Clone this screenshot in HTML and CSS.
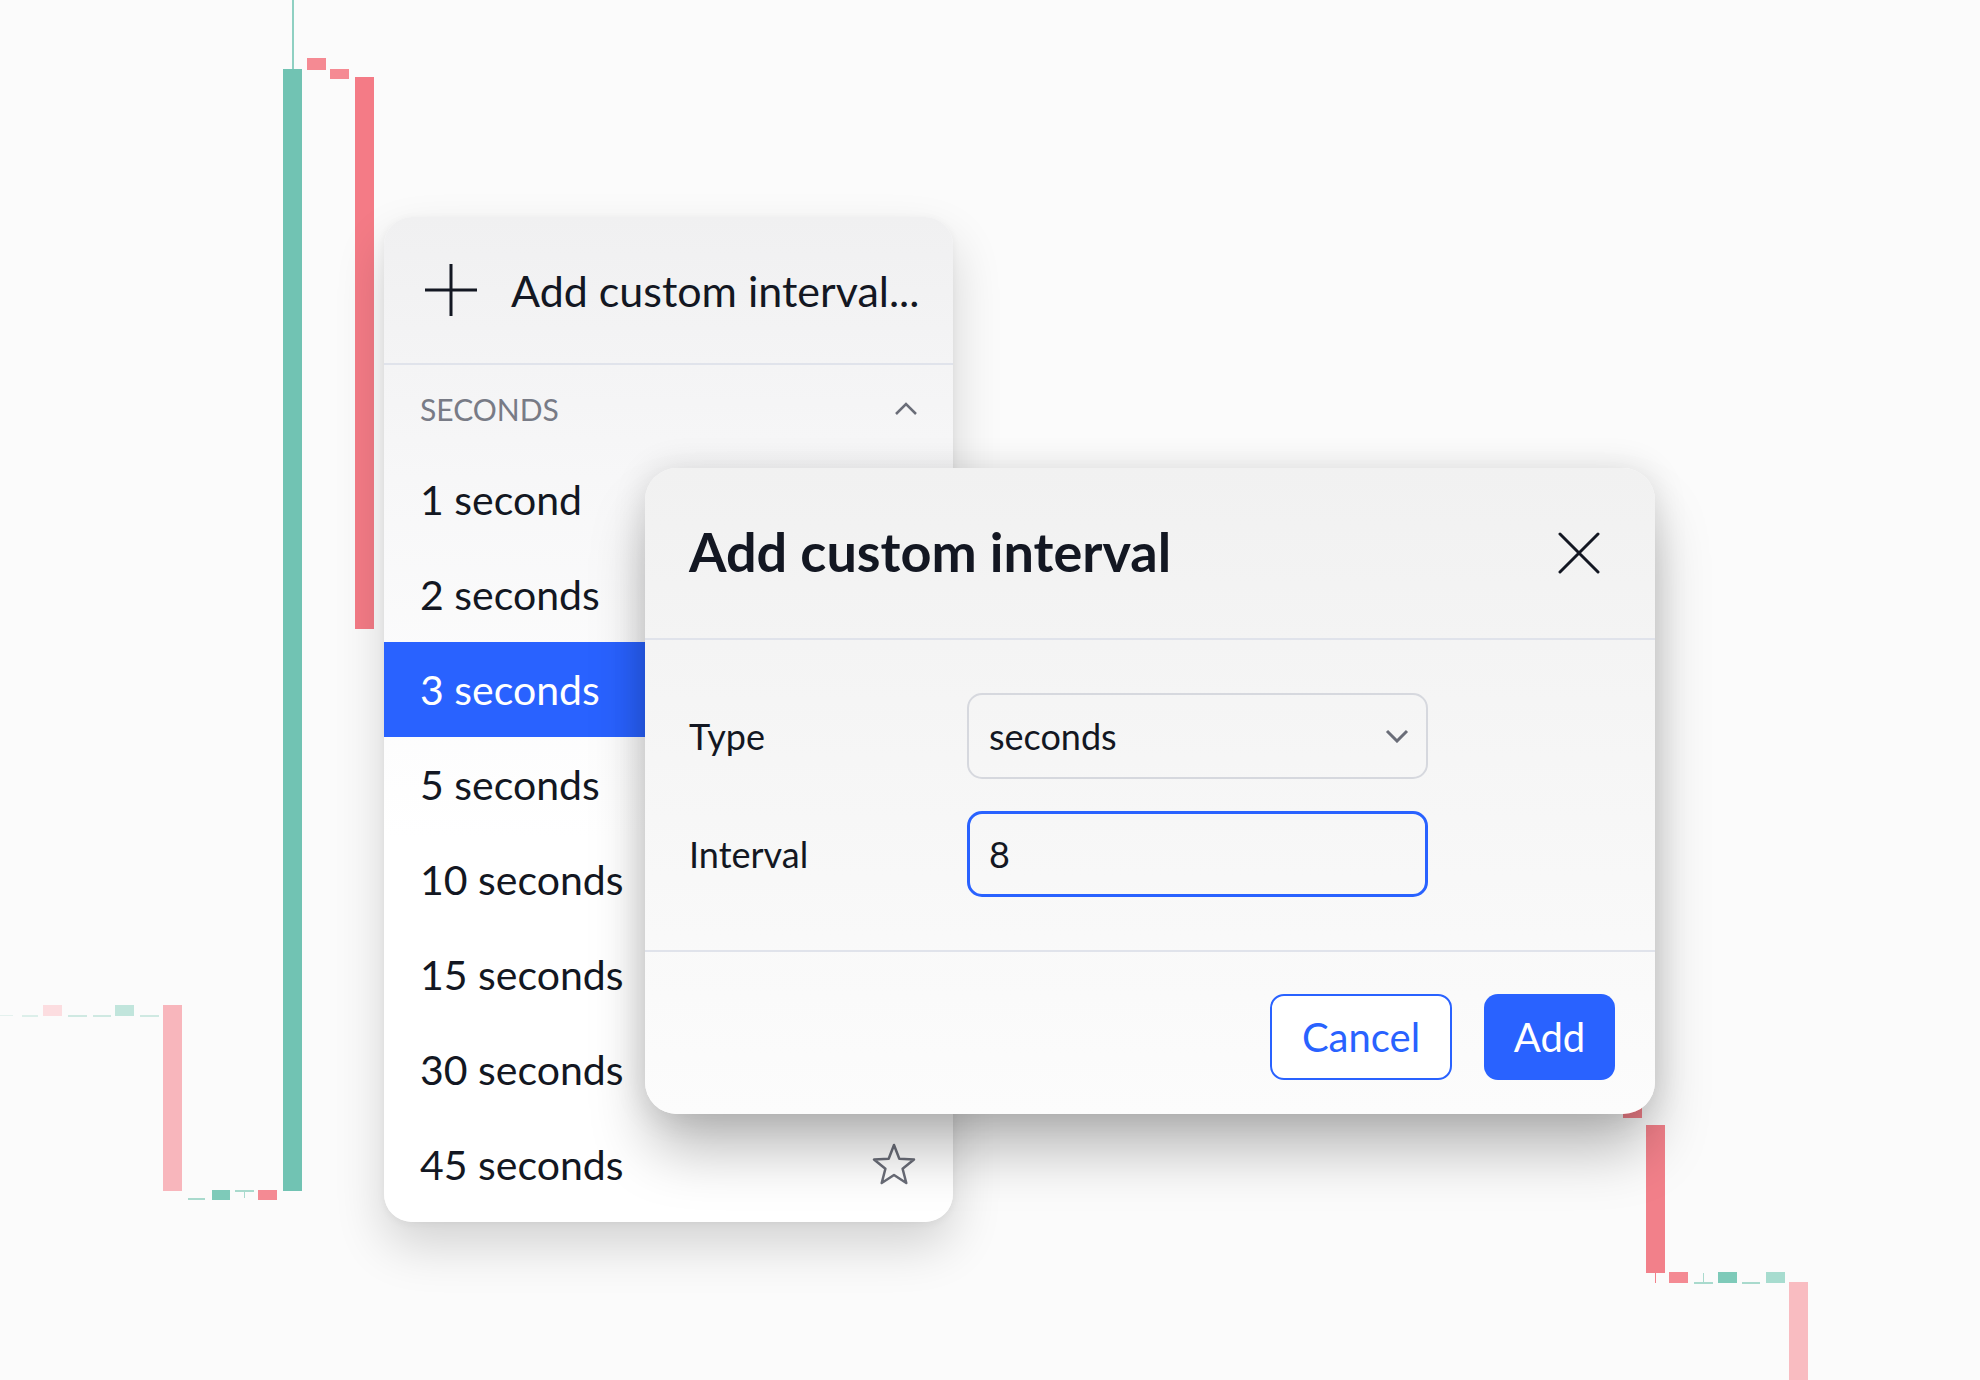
FILE: index.html
```html
<!DOCTYPE html>
<html lang="en">

<head>
    <meta charset="UTF-8">
    <title>Add custom interval</title>
    <link rel="stylesheet" href="styles.css">
</head>

<body>
    <div class="stage">
        <!-- chart candles in the background -->
        <svg class="chart" width="1980" height="1380" viewBox="0 0 1980 1380">
            <rect x="292" y="0" width="2" height="69" fill="#8fd0c2" />
            <rect x="283" y="69" width="19" height="1122" fill="#71c3b3" />
            <rect x="307" y="58" width="19" height="12" fill="#f58a93" />
            <rect x="330" y="69" width="19" height="10" fill="#f58a93" />
            <rect x="355" y="77" width="19" height="552" fill="#f47b86" />

            <rect x="0" y="1015" width="13" height="1" fill="#e4f1ee" />
            <rect x="22" y="1015" width="16" height="2" fill="#dcefea" />
            <rect x="43" y="1005" width="19" height="11" fill="#fcdde0" />
            <rect x="68" y="1015" width="19" height="2" fill="#cfe9e2" />
            <rect x="93" y="1015" width="18" height="2" fill="#cfe9e2" />
            <rect x="115" y="1005" width="19" height="11" fill="#c1e5dc" />
            <rect x="140" y="1015" width="19" height="2" fill="#cfe9e2" />
            <rect x="163" y="1005" width="19" height="186" fill="#f8b6bc" />
            <rect x="188" y="1198" width="17" height="2" fill="#a9dacd" />
            <rect x="212" y="1190" width="18" height="10" fill="#7ecab9" />
            <rect x="235" y="1190" width="19" height="2" fill="#a9dacd" />
            <rect x="244" y="1190" width="1" height="8" fill="#a9dacd" />
            <rect x="258" y="1190" width="19" height="10" fill="#f48a93" />

            <rect x="1623" y="1096" width="19" height="22" fill="#f2808a" />
            <rect x="1646" y="1125" width="19" height="148" fill="#f2808a" />
            <rect x="1655" y="1273" width="1" height="10" fill="#f2808a" />
            <rect x="1669" y="1272" width="19" height="11" fill="#f48a93" />
            <rect x="1694" y="1282" width="19" height="2" fill="#a9dacd" />
            <rect x="1703" y="1273" width="1" height="10" fill="#a9dacd" />
            <rect x="1718" y="1272" width="19" height="11" fill="#7ecab9" />
            <rect x="1742" y="1282" width="18" height="2" fill="#a9dacd" />
            <rect x="1766" y="1272" width="19" height="11" fill="#a7dccf" />
            <rect x="1789" y="1282" width="19" height="98" fill="#f9bcc1" />
        </svg>

        <div class="menu">
            <div class="menu-add">
                <svg class="icon-plus" width="52" height="52" viewBox="0 0 52 52">
                    <path d="M26 0v52M0 26h52" stroke="#131722" stroke-width="3" fill="none" />
                </svg>
                <span>Add custom interval...</span>
            </div>
            <div class="menu-section">
                <span>SECONDS</span>
                <svg width="24" height="14" viewBox="0 0 24 14">
                    <path d="M2 12L12 2l10 10" stroke="#6a6d78" stroke-width="2.5" fill="none" />
                </svg>
            </div>
            <div class="menu-item">1 second</div>
            <div class="menu-item">2 seconds</div>
            <div class="menu-item active">3 seconds</div>
            <div class="menu-item">5 seconds</div>
            <div class="menu-item">10 seconds</div>
            <div class="menu-item">15 seconds</div>
            <div class="menu-item">30 seconds</div>
            <div class="menu-item">
                <span>45 seconds</span>
                <svg class="star" width="46" height="44" viewBox="0 0 46 44">
                    <polygon points="23,2 28.3,15.7 43,16.5 31.6,25.8 35.3,40 23,32 10.7,40 14.4,25.8 3,16.5 17.7,15.7"
                        stroke="#6a6d78" stroke-width="2.5" stroke-linejoin="round" fill="none" />
                </svg>
            </div>
        </div>

        <div class="dialog">
            <div class="dialog-header">
                <h2>Add custom interval</h2>
                <svg class="close" width="42" height="42" viewBox="0 0 42 42">
                    <path d="M2 2l38 38M40 2L2 40" stroke="#131722" stroke-width="3" stroke-linecap="round" fill="none" />
                </svg>
            </div>
            <div class="dialog-body">
                <label>Type</label>
                <div class="field select">
                    <span>seconds</span>
                    <svg width="24" height="14" viewBox="0 0 24 14">
                        <path d="M2 2l10 10 10-10" stroke="#6a6d78" stroke-width="3" fill="none" />
                    </svg>
                </div>
                <label>Interval</label>
                <div class="field input">8</div>
            </div>
            <div class="dialog-footer">
                <button class="btn btn-ghost">Cancel</button>
                <button class="btn btn-primary">Add</button>
            </div>
        </div>
    </div>
</body>

</html>
```

FILE: styles.css
```css
:root {
    --bg: #fbfbfb;
    --text: #131722;
    --muted: #787b86;
    --icon: #6a6d78;
    --blue: #2962ff;
    --line: #e0e3eb;
}

body {
    margin: 0;
    background: var(--bg);
    color: var(--text);
    font-family: Lato, "Noto Sans", sans-serif;
    overflow: hidden;
}

.stage {
    position: relative;
    width: 1980px;
    height: 1380px;
}

.chart {
    display: block;
}

/* interval dropdown */
.menu {
    position: absolute;
    left: 384px;
    top: 217px;
    width: 569px;
    height: 1005px;
    border-radius: 28px;
    overflow: hidden;
    background: linear-gradient(180deg, #f0f0f1 0, #f7f7f8 260px, #ffffff 620px);
    box-shadow: 0 24px 50px rgba(0, 0, 0, 0.16), 0 2px 8px rgba(0, 0, 0, 0.05);
}

.menu-add {
    height: 146px;
    display: flex;
    align-items: center;
    gap: 34px;
    padding-left: 41px;
    border-bottom: 2px solid var(--line);
    font-size: 43px;
}

.menu-section {
    height: 87px;
    display: flex;
    align-items: center;
    justify-content: space-between;
    padding: 0 35px 0 36px;
    color: var(--muted);
    font-size: 30px;
}

.menu-item {
    height: 95px;
    display: flex;
    align-items: center;
    justify-content: space-between;
    padding: 0 36px;
    font-size: 41px;
}

.menu-item.active {
    background: var(--blue);
    color: #ffffff;
}

/* dialog */
.dialog {
    position: absolute;
    left: 645px;
    top: 468px;
    width: 1010px;
    height: 646px;
    border-radius: 32px;
    background: linear-gradient(180deg, #f1f1f1 0, #f6f6f6 45%, #fcfcfc 100%);
    box-shadow: 0 40px 60px -6px rgba(0, 0, 0, 0.28), 0 0 34px rgba(0, 0, 0, 0.12);
    display: flex;
    flex-direction: column;
}

.dialog-header {
    height: 170px;
    display: flex;
    align-items: center;
    justify-content: space-between;
    padding: 0 55px 0 44px;
    border-bottom: 2px solid var(--line);
}

.dialog-header h2 {
    margin: 0;
    font-size: 54px;
    font-weight: 700;
    position: relative;
    top: -2px;
}

.dialog-body {
    display: grid;
    grid-template-columns: 278px 461px;
    align-items: center;
    row-gap: 32px;
    padding: 53px 44px;
    border-bottom: 2px solid var(--line);
    font-size: 36px;
}

.field {
    height: 86px;
    box-sizing: border-box;
    display: flex;
    align-items: center;
    justify-content: space-between;
    padding: 0 20px;
    border-radius: 15px;
    font-size: 36px;
}

.select {
    border: 2px solid #d6d8de;
    padding-right: 17px;
}

.input {
    border: 3px solid var(--blue);
    padding-left: 19px;
}

.dialog-footer {
    flex: 1;
    display: flex;
    justify-content: flex-end;
    align-items: flex-start;
    gap: 32px;
    padding: 42px 40px 0;
}

.btn {
    height: 86px;
    border-radius: 14px;
    font-family: inherit;
    font-size: 40px;
    cursor: pointer;
}

.btn-ghost {
    width: 182px;
    background: #ffffff;
    border: 2px solid var(--blue);
    color: var(--blue);
}

.btn-primary {
    width: 131px;
    background: var(--blue);
    border: none;
    color: #ffffff;
}
```
